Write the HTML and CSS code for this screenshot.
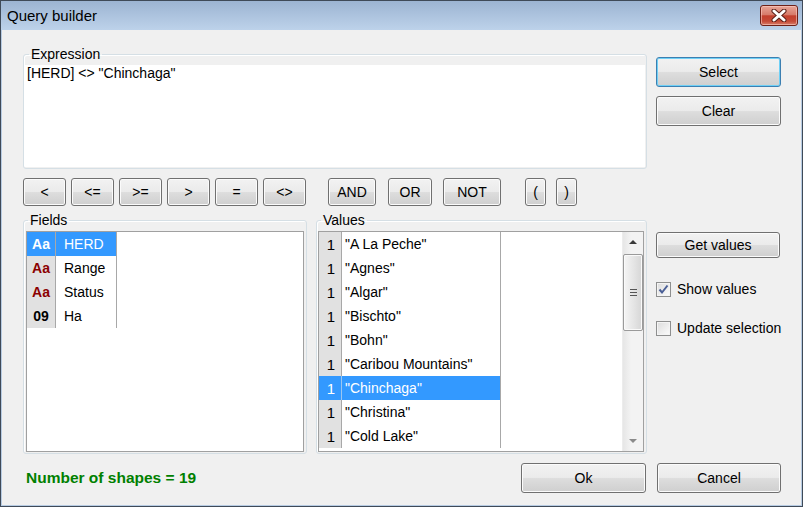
FILE: index.html
```html
<!DOCTYPE html>
<html>
<head>
<meta charset="utf-8">
<title>Query builder</title>
<link rel="stylesheet" href="styles.css">
</head>
<body>
<div class="window">
  <div class="titlebar">
    <span class="title">Query builder</span>
    <div class="close">
      <svg width="16" height="13" viewBox="0 0 16 13">
        <path d="M3 2 L13 11 M13 2 L3 11" stroke="#5b2018" stroke-width="5" stroke-linecap="round"/>
        <path d="M3 2 L13 11 M13 2 L3 11" stroke="#ffffff" stroke-width="3" stroke-linecap="round"/>
      </svg>
    </div>
  </div>
  <div class="client">
    <fieldset class="group expr-group">
      <legend>Expression</legend>
      <div class="expr-box">[HERD] &lt;&gt; "Chinchaga"</div>
    </fieldset>
    <div class="side side-top">
      <button class="btn big focused">Select</button>
      <button class="btn big">Clear</button>
    </div>

    <div class="ops">
      <button class="btn op">&lt;</button>
      <button class="btn op">&lt;=</button>
      <button class="btn op">&gt;=</button>
      <button class="btn op">&gt;</button>
      <button class="btn op">=</button>
      <button class="btn op">&lt;&gt;</button>
      <button class="btn op-and">AND</button>
      <button class="btn op-or">OR</button>
      <button class="btn op-not">NOT</button>
      <button class="btn op-lp">(</button>
      <button class="btn op-rp">)</button>
    </div>

    <div class="lists">
      <fieldset class="group fields-group">
        <legend>Fields</legend>
        <div class="listbox fields-list">
          <div class="frow sel"><span class="ficon">Aa</span><span class="fname">HERD</span></div>
          <div class="frow"><span class="ficon txt">Aa</span><span class="fname">Range</span></div>
          <div class="frow"><span class="ficon txt">Aa</span><span class="fname">Status</span></div>
          <div class="frow"><span class="ficon">09</span><span class="fname">Ha</span></div>
        </div>
      </fieldset>
      <fieldset class="group values-group">
        <legend>Values</legend>
        <div class="listbox values-list">
          <div class="vrows">
            <div class="vrow"><span class="vnum">1</span><span class="vname">"A La Peche"</span></div>
            <div class="vrow"><span class="vnum">1</span><span class="vname">"Agnes"</span></div>
            <div class="vrow"><span class="vnum">1</span><span class="vname">"Algar"</span></div>
            <div class="vrow"><span class="vnum">1</span><span class="vname">"Bischto"</span></div>
            <div class="vrow"><span class="vnum">1</span><span class="vname">"Bohn"</span></div>
            <div class="vrow"><span class="vnum">1</span><span class="vname">"Caribou Mountains"</span></div>
            <div class="vrow sel"><span class="vnum">1</span><span class="vname">"Chinchaga"</span></div>
            <div class="vrow"><span class="vnum">1</span><span class="vname">"Christina"</span></div>
            <div class="vrow"><span class="vnum">1</span><span class="vname">"Cold Lake"</span></div>
          </div>
          <div class="scrollbar">
            <div class="sb-btn"><span class="arrow up"></span></div>
            <div class="sb-track">
              <div class="thumb"><span class="grip"></span><span class="grip"></span><span class="grip"></span></div>
            </div>
            <div class="sb-btn"><span class="arrow down"></span></div>
          </div>
        </div>
      </fieldset>
    </div>
    <div class="side side-mid">
      <button class="btn getv">Get values</button>
      <label class="check first"><span class="cb"><svg width="11" height="11" viewBox="0 0 11 11"><path d="M1.5 5.5 L4 8.5 L9.5 1.5" fill="none" stroke="#4a5f96" stroke-width="2"/></svg></span>Show values</label>
      <label class="check"><span class="cb"></span>Update selection</label>
    </div>

    <div class="bottom">
      <span class="count">Number of shapes = 19</span>
      <button class="btn big ok">Ok</button>
    </div>
    <div class="side side-bottom">
      <button class="btn big cancel">Cancel</button>
    </div>
  </div>
</div>
</body>
</html>
```

FILE: styles.css
```css
html, body {
  margin: 0;
  padding: 0;
  background: #f0f0f0;
}

.window {
  width: 803px;
  height: 507px;
  box-sizing: border-box;
  border: 1px solid #3f4a58;
  display: flex;
  flex-direction: column;
  background: #bcd1e9;
  font-family: "Liberation Sans", Arial, sans-serif;
  font-size: 14px;
  color: #000;
  overflow: hidden;
}

.titlebar {
  height: 29px;
  flex: none;
  display: flex;
  align-items: center;
  justify-content: space-between;
  padding: 0 4px 0 6px;
  background: linear-gradient(#9cb4d2, #bdd2ea);
}

.title {
  font-size: 15px;
  color: #000;
}

.close {
  width: 38px;
  height: 21px;
  box-sizing: border-box;
  border: 1px solid #6e2118;
  border-radius: 3px;
  background: linear-gradient(#e8a597 0%, #d77c6b 45%, #c3402d 52%, #c54a37 80%, #d77f6b 100%);
  box-shadow: inset 0 0 0 1px rgba(255, 210, 200, 0.55);
  display: flex;
  align-items: center;
  justify-content: center;
}

.client {
  flex: 1;
  background: #f0f0f0;
  border: 1px solid #b7cbe2;
  border-top: none;
  display: grid;
  grid-template-columns: 624px 125px;
  column-gap: 9px;
  align-content: start;
  padding: 16px 0 0 21px;
}

.group {
  margin: 0;
  border: 1px solid #d5dfe5;
  border-radius: 3px;
  min-width: 0;
  box-shadow: inset 1px 1px 0 #fff;
}

.group legend {
  padding: 0 2px;
  line-height: 16px;
  font-size: 14px;
}

.expr-group {
  padding: 3px 1px 1px 1px;
}

.expr-group legend {
  margin-left: 4px;
}

.expr-box {
  height: 102px;
  background: #fff;
  padding-left: 2px;
  line-height: 16px;
}

.side {
  display: flex;
  flex-direction: column;
  align-items: flex-start;
}

.side-top {
  padding-top: 11px;
  gap: 9px;
}

.btn {
  box-sizing: border-box;
  border: 1px solid #707070;
  border-radius: 3px;
  background: linear-gradient(#f2f2f2 0%, #ebebeb 48%, #dddddd 52%, #cfcfcf 100%);
  box-shadow: inset 0 0 0 1px #fbfbfb;
  font-family: "Liberation Sans", Arial, sans-serif;
  font-size: 14px;
  color: #000;
  padding: 0;
  margin: 0;
  display: flex;
  align-items: center;
  justify-content: center;
}

.btn.big {
  width: 125px;
  height: 30px;
}

.btn.focused {
  border-color: #3c7fb1;
  box-shadow: inset 0 0 0 1px #6fd0f6;
}

.ops {
  grid-column: 1 / 3;
  margin-top: 9px;
  display: flex;
  height: 28px;
}

.ops .btn {
  height: 28px;
}

.op {
  width: 43px;
  margin-right: 5px;
}

.op-and {
  width: 48px;
  margin-left: 17px;
}

.op-or {
  width: 44px;
  margin-left: 12px;
}

.op-not {
  width: 58px;
  margin-left: 11px;
}

.op-lp {
  width: 21px;
  margin-left: 24px;
}

.op-rp {
  width: 21px;
  margin-left: 10px;
}

.lists {
  margin-top: 6px;
  display: flex;
  gap: 9px;
}

.fields-group {
  width: 284px;
  box-sizing: border-box;
  padding: 3px 2px 1px 2px;
}

.fields-group legend {
  margin-left: 2px;
}

.values-group {
  width: 331px;
  box-sizing: border-box;
  padding: 3px 2px 1px 1px;
}

.values-group legend {
  margin-left: 3px;
}

.listbox {
  height: 221px;
  box-sizing: border-box;
  border: 1px solid #a0a0a0;
  background: #fff;
}

.frow {
  display: flex;
  height: 24px;
  line-height: 25px;
}

.ficon {
  width: 28px;
  border-right: 1px solid #a8a8a8;
  background: #e1e1e1;
  font-weight: bold;
  text-align: center;
}

.ficon.txt {
  color: #8b0000;
}

.fname {
  width: 52px;
  padding-left: 8px;
  border-right: 1px solid #a8a8a8;
}

.frow.sel .ficon,
.frow.sel .fname {
  background: #3399ff;
  color: #fff;
}

.values-list {
  display: flex;
}

.vrows {
  flex: 1;
}

.vrow {
  display: flex;
  height: 24px;
  line-height: 25px;
}

.vnum {
  width: 16px;
  padding-right: 6px;
  text-align: right;
  background: #e1e1e1;
  border-right: 1px solid #a8a8a8;
  font-size: 15px;
}

.vname {
  width: 155px;
  padding-left: 3px;
  border-right: 1px solid #a8a8a8;
  white-space: nowrap;
}

.vrow.sel .vnum,
.vrow.sel .vname {
  background: #3399ff;
  color: #fff;
}

.vrow.sel .vnum {
  border-right-color: #9cc6f0;
}

.scrollbar {
  width: 20px;
  display: flex;
  flex-direction: column;
  background: linear-gradient(90deg, #e6e6e6, #f3f3f3 40%, #f3f3f3);
  border-left: 1px solid #ececec;
}

.sb-btn {
  height: 20px;
  display: flex;
  align-items: center;
  justify-content: center;
}

.arrow {
  width: 0;
  height: 0;
  border-left: 4px solid transparent;
  border-right: 4px solid transparent;
}

.arrow.up {
  border-bottom: 4px solid #3a3a3a;
}

.arrow.down {
  border-top: 4px solid #8a8a8a;
}

.sb-track {
  flex: 1;
  padding: 2px 0 0 0;
}

.thumb {
  height: 77px;
  box-sizing: border-box;
  border: 1px solid #9a9a9a;
  border-radius: 2px;
  background: linear-gradient(90deg, #f5f5f5, #e6e6e6 50%, #d6d6d6);
  box-shadow: inset 0 0 0 1px #fafafa;
  display: flex;
  flex-direction: column;
  align-items: center;
  justify-content: center;
  gap: 2px;
}

.grip {
  width: 7px;
  height: 1px;
  background: #555;
}

.side-mid {
  margin-top: 6px;
  padding-top: 20px;
}

.btn.getv {
  width: 124px;
  height: 26px;
}

.check {
  display: flex;
  align-items: center;
  gap: 6px;
  margin-top: 24px;
  height: 15px;
  line-height: 15px;
  white-space: nowrap;
}

.cb {
  width: 15px;
  height: 15px;
  box-sizing: border-box;
  border: 1px solid #8e8f8f;
  background: linear-gradient(135deg, #dcdcdc, #fcfcfc);
  box-shadow: inset 0 0 0 1px #f4f4f4;
  display: flex;
  align-items: center;
  justify-content: center;
}

.bottom {
  margin-top: 9px;
  display: flex;
  align-items: center;
  justify-content: space-between;
}

.count {
  padding-left: 3px;
  color: #008000;
  font-weight: bold;
  font-size: 15.5px;
}

.btn.ok {
  margin-right: 1px;
}

.side-bottom {
  margin-top: 9px;
}

.btn.cancel {
  width: 124px;
  margin-left: 1px;
}
```
